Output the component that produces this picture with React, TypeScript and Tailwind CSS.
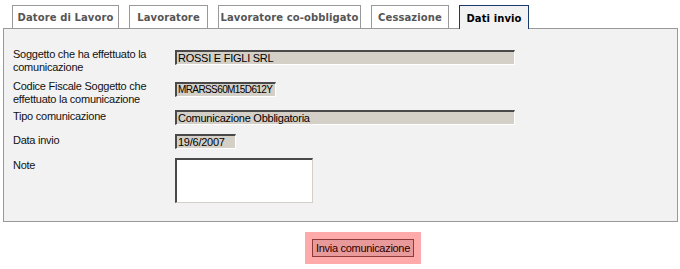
// Dati invio tab of the comunicazione form

const tabs = [
  { label: 'Datore di Lavoro', w: 'w-[107px]', active: false },
  { label: 'Lavoratore', w: 'w-[79px]', active: false },
  { label: 'Lavoratore co-obbligato', w: 'w-[143px]', active: false },
  { label: 'Cessazione', w: 'w-[78px]', active: false },
  { label: 'Dati invio', w: 'w-[70px]', active: true },
]

const inputCls =
  'h-[15px] bg-[#d4d0c8] border-t-2 border-l-2 border-b border-r border-t-[#4a4a4a] border-l-[#4a4a4a] border-b-white border-r-white pl-[1px] leading-[12px] text-black whitespace-nowrap overflow-hidden'

function Field({ value, w, tight }: { value: string; w: string; tight?: boolean }) {
  return (
    <div className={`${inputCls} ${w} ${tight ? 'text-[10px] tracking-[-0.6px]' : 'text-[11px]'}`}>
      {value}
    </div>
  )
}

export default function App() {
  return (
    <div className="w-[680px] h-[269px] bg-white font-['Liberation_Sans',sans-serif] text-[11px] tracking-[-0.25px] text-[#111]">
      <div className="flex items-end gap-[10px] pl-[12px] pt-[5px]">
        {tabs.map((t) => (
          <div
            key={t.label}
            className={`${t.w} h-[23px] flex items-center justify-center pt-[1px] font-['DejaVu_Sans',sans-serif] font-bold text-[10px] tracking-[0.1px] border border-b-0 ${
              t.active
                ? 'bg-[#f2f2f2] border-[#1a3a6b] text-black h-[24px] -mb-px relative z-10'
                : 'bg-white border-[#999] text-[#555]'
            }`}
          >
            {t.label}
          </div>
        ))}
      </div>

      <div className="ml-[3px] w-[675px] border border-[#999] bg-[#f2f2f2] pt-[19px] pb-[18px] pl-[9px]">
        <div className="flex">
          <div className="w-[162px] leading-[13px]">
            Soggetto che ha effettuato la
            <br />
            comunicazione
          </div>
          <div className="mt-[2px]">
            <Field value="ROSSI E FIGLI SRL" w="w-[340px]" />
          </div>
        </div>

        <div className="flex mt-[6px]">
          <div className="w-[162px] leading-[13px]">
            Codice Fiscale Soggetto che
            <br />
            effettuato la comunicazione
          </div>
          <div className="mt-[2px]">
            <Field value="MRARSS60M15D612Y" w="w-[101px]" tight />
          </div>
        </div>

        <div className="flex mt-[2px]">
          <div className="w-[162px] leading-[13px] pt-[2px]">Tipo comunicazione</div>
          <div className="mt-[2px]">
            <Field value="Comunicazione Obbligatoria" w="w-[340px]" />
          </div>
        </div>

        <div className="flex mt-[7px]">
          <div className="w-[162px] leading-[13px] pt-[2px]">Data invio</div>
          <div className="mt-[2px]">
            <Field value="19/6/2007" w="w-[61px]" />
          </div>
        </div>

        <div className="flex mt-[7px]">
          <div className="w-[162px] leading-[13px] pt-[3px]">Note</div>
          <div className="mt-[2px]">
            <div className="w-[138px] h-[45px] bg-white border-t-2 border-l-2 border-b border-r border-t-[#4a4a4a] border-l-[#4a4a4a] border-b-[#d4d0c8] border-r-[#d4d0c8]" />
          </div>
        </div>
      </div>

      <div className="ml-[305px] mt-[10px] w-[116px] h-[32px] bg-[#ffaaaa] flex items-center justify-center">
        <button className="w-[102px] h-[18px] bg-[#e89a9a] border border-[#8f3a3a] text-[11px] leading-[14px] tracking-[-0.3px] text-[#2a0000] font-['Liberation_Sans',sans-serif]">
          Invia comunicazione
        </button>
      </div>
    </div>
  )
}
